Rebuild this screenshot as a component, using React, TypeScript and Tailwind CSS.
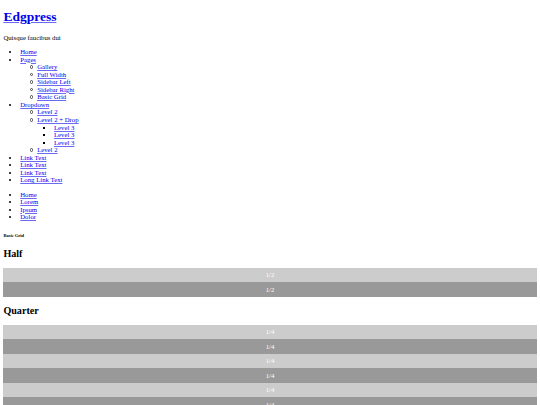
const nav = [
  { label: "Home" },
  {
    label: "Pages",
    children: [
      { label: "Gallery" },
      { label: "Full Width" },
      { label: "Sidebar Left" },
      { label: "Sidebar Right" },
      { label: "Basic Grid" },
    ],
  },
  {
    label: "Dropdown",
    children: [
      { label: "Level 2" },
      {
        label: "Level 2 + Drop",
        children: [{ label: "Level 3" }, { label: "Level 3" }, { label: "Level 3" }],
      },
      { label: "Level 2" },
    ],
  },
  { label: "Link Text" },
  { label: "Link Text" },
  { label: "Link Text" },
  { label: "Long Link Text" },
];

type NavItem = { label: string; children?: NavItem[] };

// second level gets a hollow marker, the native circle fills in at this size
const listStyles = ["list-disc", "list-none", "list-[square]"];

const Link = ({ children }: { children: React.ReactNode }) => (
  <a href="#" className="text-[#0000ee] underline decoration-[#6a6af2]">
    {children}
  </a>
);

const NavList = ({ items, depth = 0 }: { items: NavItem[]; depth?: number }) => (
  <ul
    className={`${listStyles[depth]} pl-[16.875px] ${depth === 0 ? "my-[6.75px]" : ""}`}
  >
    {items.map((item, i) => (
      <li key={`${item.label}-${i}`} className="leading-[7.55px]">
        {depth === 1 && (
          <span className="-ml-[7.5px] mr-[4px] inline-block size-[3.5px] rounded-full border border-[#444] align-[0.5px]" />
        )}
        <Link>{item.label}</Link>
        {item.children && <NavList items={item.children} depth={depth + 1} />}
      </li>
    ))}
  </ul>
);

const Bar = ({ label, dark }: { label: string; dark: boolean }) => (
  <div
    className={`flex h-[14.45px] items-center justify-center text-white ${
      dark ? "bg-[#999999]" : "bg-[#cccccc]"
    }`}
  >
    {label}
  </div>
);

export default function App() {
  return (
    <div className="h-[405px] overflow-hidden bg-white px-[3.375px] pt-[0.01px] font-['Liberation_Serif',serif] text-[6.75px] leading-[7.55px] text-black">
      <header>
        <h1 className="my-[9.05px] text-[13.5px] font-bold leading-[15.5px]">
          <Link>Edgpress</Link>
        </h1>
        <p className="my-[6.75px] leading-[7.76px]">Quisque faucibus dui</p>
        <nav>
          <NavList items={nav} />
        </nav>
      </header>

      <NavList
        items={[{ label: "Home" }, { label: "Lorem" }, { label: "Ipsum" }, { label: "Dolor" }]}
      />

      <main>
        <h6 className="mt-[11.8px] mb-[9.8px] text-[4.52px] font-bold leading-[5.2px]">
          Basic Grid
        </h6>

        <h2 className="my-[8.4px] text-[10.125px] font-bold leading-[11.6px]">Half</h2>
        <div>
          {[0, 1].map((i) => (
            <Bar key={i} label="1/2" dark={i % 2 === 1} />
          ))}
        </div>

        <h2 className="my-[8.4px] text-[10.125px] font-bold leading-[11.6px]">Quarter</h2>
        <div>
          {[0, 1, 2, 3, 4, 5, 6, 7].map((i) => (
            <Bar key={i} label="1/4" dark={i % 2 === 1} />
          ))}
        </div>
      </main>
    </div>
  );
}
